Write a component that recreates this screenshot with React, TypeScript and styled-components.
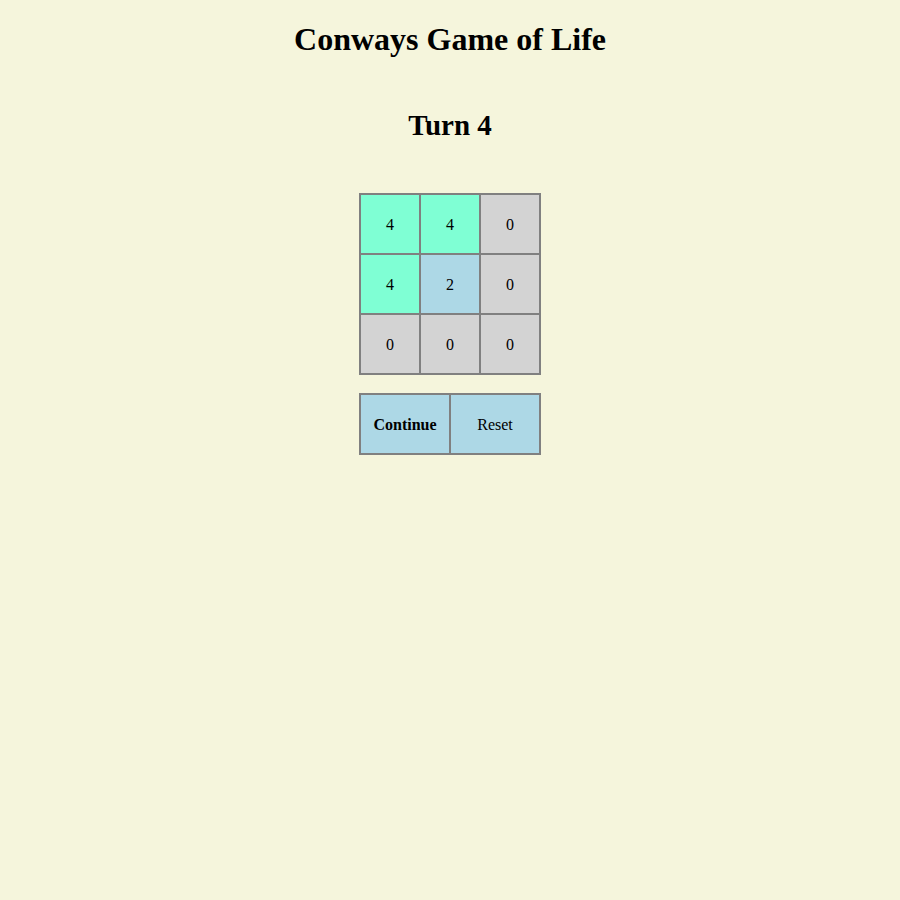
import React from "react";
import styled, { createGlobalStyle } from "styled-components";

const Global = createGlobalStyle`
  html, body {
    margin: 0;
    padding: 0;
    background: #f5f5dc;
  }
  body {
    font-family: "Liberation Serif", "Times New Roman", serif;
    color: #000;
  }
`;

const Page = styled.div`
  display: flex;
  flex-direction: column;
  align-items: center;
  padding-top: 21px;
`;

const Title = styled.h1`
  margin: 0;
  font-size: 32px;
  line-height: 37px;
  font-weight: bold;
`;

const Turn = styled.h2`
  margin: 49px 0 0;
  font-size: 29px;
  line-height: 37px;
  font-weight: bold;
`;

const Board = styled.div`
  margin-top: 49px;
  display: grid;
  grid-template-columns: repeat(3, 60px);
  grid-auto-rows: 60px;
  border: 1px solid #808080;
`;

type CellKind = "alive" | "born" | "dead";

const cellColors: Record<CellKind, string> = {
  alive: "#7fffd4",
  born: "#add8e6",
  dead: "#d3d3d3",
};

const Cell = styled.div<{ $kind: CellKind }>`
  box-sizing: border-box;
  border: 1px solid #808080;
  background: ${(p) => cellColors[p.$kind]};
  display: flex;
  align-items: center;
  justify-content: center;
  padding-top: 1px;
  font-size: 16px;
`;

const Controls = styled.div`
  margin-top: 18px;
  display: flex;
  border: 1px solid #808080;
`;

const Button = styled.button<{ $primary?: boolean }>`
  box-sizing: border-box;
  width: 90px;
  height: 60px;
  margin: 0;
  padding: 2px 0 0;
  border: 1px solid #808080;
  background: #add8e6;
  font-family: "Liberation Serif", "Times New Roman", serif;
  font-size: 16px;
  font-weight: ${(p) => (p.$primary ? "bold" : "normal")};
  color: #000;
  cursor: pointer;
`;

const cells: { value: number; kind: CellKind }[] = [
  { value: 4, kind: "alive" },
  { value: 4, kind: "alive" },
  { value: 0, kind: "dead" },
  { value: 4, kind: "alive" },
  { value: 2, kind: "born" },
  { value: 0, kind: "dead" },
  { value: 0, kind: "dead" },
  { value: 0, kind: "dead" },
  { value: 0, kind: "dead" },
];

export default function App() {
  return (
    <>
      <Global />
      <Page>
        <Title>Conways Game of Life</Title>
        <Turn>Turn 4</Turn>
        <Board>
          {cells.map((c, i) => (
            <Cell key={i} $kind={c.kind}>
              {c.value}
            </Cell>
          ))}
        </Board>
        <Controls>
          <Button $primary>Continue</Button>
          <Button>Reset</Button>
        </Controls>
      </Page>
    </>
  );
}
